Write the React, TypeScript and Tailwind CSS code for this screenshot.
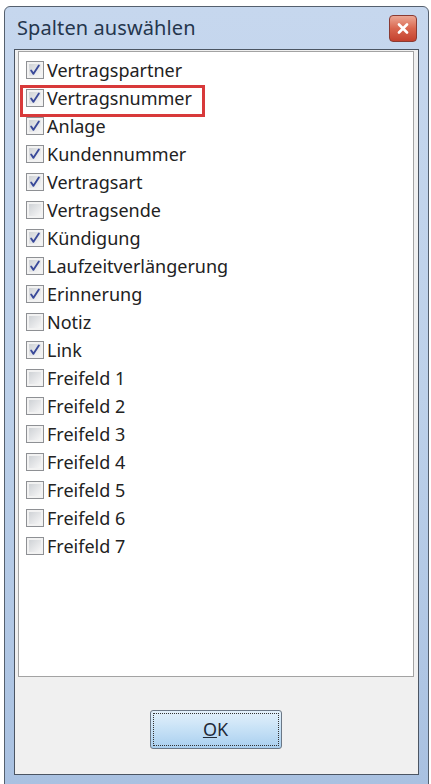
import React from "react";

const items: [string, boolean][] = [
  ["Vertragspartner", true],
  ["Vertragsnummer", true],
  ["Anlage", true],
  ["Kundennummer", true],
  ["Vertragsart", true],
  ["Vertragsende", false],
  ["Kündigung", true],
  ["Laufzeitverlängerung", true],
  ["Erinnerung", true],
  ["Notiz", false],
  ["Link", true],
  ["Freifeld 1", false],
  ["Freifeld 2", false],
  ["Freifeld 3", false],
  ["Freifeld 4", false],
  ["Freifeld 5", false],
  ["Freifeld 6", false],
  ["Freifeld 7", false],
];

function Box({ checked }: { checked: boolean }) {
  return (
    <div className="w-[18px] h-[18px] border border-[#8e9094] bg-[#f2f2f2] p-[2px] shrink-0">
      <div className="w-full h-full bg-gradient-to-br from-[#cfd2d6] to-[#f7f7f7] flex items-center justify-center">
        {checked && (
          <svg width="14" height="14" viewBox="0 0 14 14">
            <path d="M2.5 7.5 L5.2 11.5 L11.5 1.8" fill="none" stroke="#3a4a9a" strokeWidth="2.2" strokeLinecap="round" strokeLinejoin="round" />
          </svg>
        )}
      </div>
    </div>
  );
}

export default function App() {
  return (
    <div className="w-[431px] h-[784px] bg-white pl-[4px] pr-[2px] pt-[6px] font-['Noto_Sans','Open_Sans',sans-serif] relative overflow-hidden">
      <div className="h-[779px] border border-[#55606e] rounded-t-[6px] bg-gradient-to-b from-[#c6d7ee] via-[#bdd1ea] to-[#a9c1e1] flex flex-col px-[9px] pb-[9px]">
        <div className="h-[42px] flex items-center justify-between pl-[3px] pr-[2px] shrink-0">
          <span className="text-[20px] text-[#25364d] tracking-[0.1px]">Spalten auswählen</span>
          <div className="w-[28px] h-[27px] rounded-[4px] border border-[#8a3b33] bg-gradient-to-b from-[#eba795] via-[#d9664f] to-[#c4412e] flex items-center justify-center">
            <svg width="12" height="11" viewBox="0 0 12 11">
              <path d="M2 1.5 L10 9.5 M10 1.5 L2 9.5" stroke="#ffffff" strokeWidth="2.6" strokeLinecap="round" />
            </svg>
          </div>
        </div>
        <div className="flex-1 border border-[#4b5563] bg-[#f0f0f0] flex flex-col pl-[3px] pr-[4px] pt-[1px]">
          <div className="h-[626px] border border-[#a3a3a3] bg-white pt-[4px] pl-[7px]">
            {items.map(([label, checked]) => (
              <div key={label} className="h-[28px] flex items-center gap-[3px]">
                <Box checked={checked} />
                <span className="text-[18px] text-[#222] leading-none">{label}</span>
              </div>
            ))}
          </div>
          <div className="flex-1 flex items-start justify-center pt-[33px] pr-[1px]">
            <div className="w-[132px] h-[39px] rounded-[3px] border border-[#6b7785] bg-gradient-to-b from-[#e4f1fb] via-[#c6e1f6] to-[#a9cfef] p-[2px]">
              <div className="w-full h-full border border-dotted border-[#333] flex items-center justify-center">
                <span className="text-[18px] text-[#1f2a38]"><span className="underline">O</span>K</span>
              </div>
            </div>
          </div>
        </div>
      </div>
      <div className="absolute left-[20px] top-[85px] w-[185px] h-[32px] border-[3px] border-[#d8393a]" />
    </div>
  );
}
